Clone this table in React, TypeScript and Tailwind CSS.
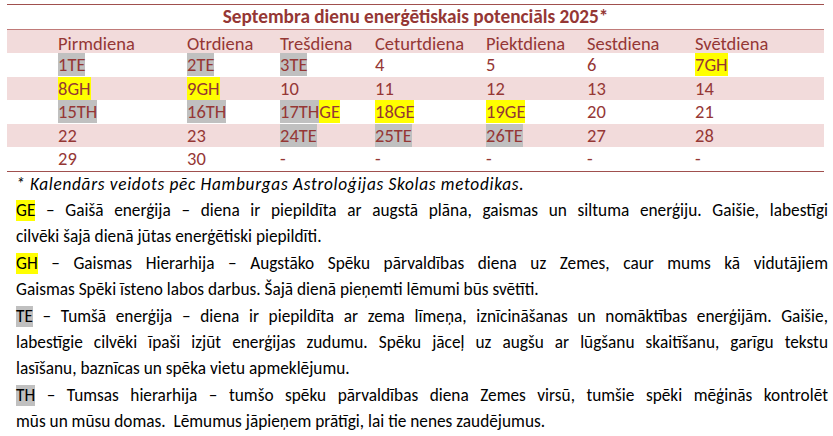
import React from "react";

type Part = { t: string; hl?: "g" | "y" };
type Cell = Part[];

const days = ["Pirmdiena", "Otrdiena", "Trešdiena", "Ceturtdiena", "Piektdiena", "Sestdiena", "Svētdiena"];

const g = (t: string): Part => ({ t, hl: "g" });
const y = (t: string): Part => ({ t, hl: "y" });
const p = (t: string): Part => ({ t });

const rows: Cell[][] = [
  [[g("1TE")], [g("2TE")], [g("3TE")], [p("4")], [p("5")], [p("6")], [y("7GH")]],
  [[y("8GH")], [y("9GH")], [p("10")], [p("11")], [p("12")], [p("13")], [p("14")]],
  [[g("15TH")], [g("16TH")], [g("17TH"), y("GE")], [y("18GE")], [y("19GE")], [p("20")], [p("21")]],
  [[p("22")], [p("23")], [g("24TE")], [g("25TE")], [g("26TE")], [p("27")], [p("28")]],
  [[p("29")], [p("30")], [p("-")], [p("-")], [p("-")], [p("-")], [p("-")]],
];

const cols = "grid grid-cols-[129px_93px_95px_111px_101px_108px_1fr] pl-[51px]";

const Hl = ({ kind, children }: { kind: "g" | "y"; children: React.ReactNode }) => (
  <span className={kind === "g" ? "bg-[#c0c0c0]" : "bg-[#ffff00]"}>{children}</span>
);

// one visual line of a justified paragraph
const Line = ({ last, children }: { last?: boolean; children: React.ReactNode }) => (
  <div className={last ? "whitespace-nowrap" : "text-justify [text-align-last:justify] whitespace-nowrap"}>{children}</div>
);

const paragraphs: { tag: string; kind: "g" | "y"; lines: string[] }[] = [
  {
    tag: "GE",
    kind: "y",
    lines: [
      " – Gaišā enerģija – diena ir piepildīta ar augstā plāna, gaismas un siltuma enerģiju. Gaišie, labestīgi",
      "cilvēki šajā dienā jūtas enerģētiski piepildīti.",
    ],
  },
  {
    tag: "GH",
    kind: "y",
    lines: [
      " – Gaismas Hierarhija – Augstāko Spēku pārvaldības diena uz Zemes, caur mums kā vidutājiem",
      "Gaismas Spēki īsteno labos darbus. Šajā dienā pieņemti lēmumi būs svētīti.",
    ],
  },
  {
    tag: "TE",
    kind: "g",
    lines: [
      " – Tumšā enerģija – diena ir piepildīta ar zema līmeņa, iznīcināšanas un nomāktības enerģijām. Gaišie,",
      "labestīgie cilvēki īpaši izjūt enerģijas zudumu. Spēku jāceļ uz augšu ar lūgšanu skaitīšanu, garīgu tekstu",
      "lasīšanu, baznīcas un spēka vietu apmeklējumu.",
    ],
  },
  {
    tag: "TH",
    kind: "g",
    lines: [
      " – Tumsas hierarhija – tumšo spēku pārvaldības diena Zemes virsū, tumšie spēki mēģinās kontrolēt",
      "mūs un mūsu domas.\u00a0 Lēmumus jāpieņem prātīgi, lai tie nenes zaudējumus.",
    ],
  },
];

export default function App() {
  return (
    <div className="w-[833px] h-[436px] overflow-hidden bg-white font-['Carlito','Lato',sans-serif]">
      <div className="pl-[7px] pt-[4px]">
        <div className="w-[817px] text-[18.5px] text-[#953735] border-t-[1.5px] border-b-[1.5px] border-[#a0504e]">
          <div className="h-[24px] flex items-center justify-center font-bold text-[19.3px]">
            Septembra dienu enerģētiskais potenciāls 2025*
          </div>
          <div className={`${cols} h-[24px] items-center bg-[#f2dbdb] border-t border-[#c07b79]`}>
            {days.map((d) => (
              <div key={d}>{d}</div>
            ))}
          </div>
          {rows.map((r, i) => (
            <div key={i} className={`${cols} h-[23.5px] items-center leading-[23px] ${i % 2 === 1 ? "bg-[#f2dbdb]" : ""}`}>
              {r.map((cell, j) => (
                <div key={j} className="whitespace-nowrap">
                  {cell.map((part, k) =>
                    part.hl ? (
                      <span key={k} className={`inline-block ${part.hl === "g" ? "bg-[#c0c0c0]" : "bg-[#ffff00]"}`}>
                        {part.t}
                      </span>
                    ) : (
                      <span key={k}>{part.t}</span>
                    )
                  )}
                </div>
              ))}
            </div>
          ))}
        </div>
      </div>
      <div className="pl-[16px] w-[828px] text-[17.3px] leading-[26.4px] text-black">
        <div className="italic tracking-[0.7px]">* Kalendārs veidots pēc Hamburgas Astroloģijas Skolas metodikas.</div>
        {paragraphs.map((para) => (
          <div key={para.tag}>
            {para.lines.map((l, i) => (
              <Line key={i} last={i === para.lines.length - 1}>
                {i === 0 && <Hl kind={para.kind}>{para.tag}</Hl>}
                {l}
              </Line>
            ))}
          </div>
        ))}
      </div>
    </div>
  );
}
